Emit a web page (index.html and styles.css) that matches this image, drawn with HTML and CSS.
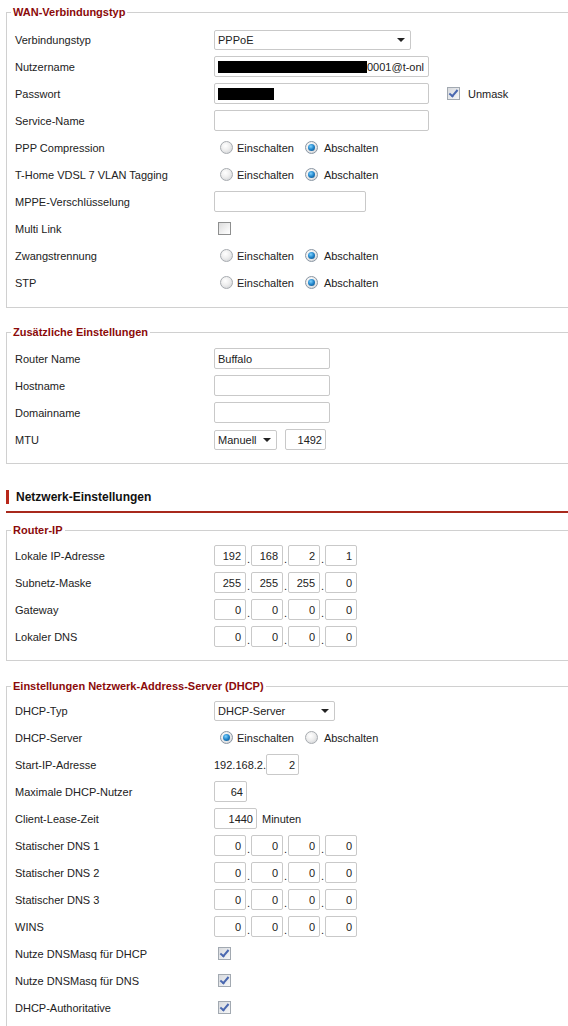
FILE: index.html
```html
<!DOCTYPE html>
<html lang="de">
<head>
<meta charset="utf-8">
<title>Setup</title>
<link rel="stylesheet" href="styles.css">
</head>
<body>
<div class="page">

  <fieldset class="box box-wan">
    <legend>WAN-Verbindungstyp</legend>
    <div class="row"><span class="lbl">Verbindungstyp</span>
      <div class="select w-197"><span>PPPoE</span><i class="arrow"></i></div></div>
    <div class="row"><span class="lbl">Nutzername</span>
      <div class="field w-215"><span class="redact r-user"></span><span class="clip">0001@t-onl</span></div></div>
    <div class="row"><span class="lbl">Passwort</span>
      <div class="field w-215"><span class="redact r-pass"></span></div>
      <span class="check on unmask"></span><span class="after">Unmask</span></div>
    <div class="row"><span class="lbl">Service-Name</span><div class="field w-215"></div></div>
    <div class="row"><span class="lbl">PPP Compression</span>
      <span class="radio"></span><span class="opt">Einschalten</span><span class="radio on second"></span><span class="opt">Abschalten</span></div>
    <div class="row"><span class="lbl">T-Home VDSL 7 VLAN Tagging</span>
      <span class="radio"></span><span class="opt">Einschalten</span><span class="radio on second"></span><span class="opt">Abschalten</span></div>
    <div class="row"><span class="lbl">MPPE-Verschlüsselung</span><div class="field w-152"></div></div>
    <div class="row"><span class="lbl">Multi Link</span><span class="check"></span></div>
    <div class="row"><span class="lbl">Zwangstrennung</span>
      <span class="radio"></span><span class="opt">Einschalten</span><span class="radio on second"></span><span class="opt">Abschalten</span></div>
    <div class="row"><span class="lbl">STP</span>
      <span class="radio"></span><span class="opt">Einschalten</span><span class="radio on second"></span><span class="opt">Abschalten</span></div>
  </fieldset>

  <fieldset class="box">
    <legend>Zusätzliche Einstellungen</legend>
    <div class="row"><span class="lbl">Router Name</span><div class="field w-116">Buffalo</div></div>
    <div class="row"><span class="lbl">Hostname</span><div class="field w-116"></div></div>
    <div class="row"><span class="lbl">Domainname</span><div class="field w-116"></div></div>
    <div class="row"><span class="lbl">MTU</span>
      <div class="select w-63"><span>Manuell</span><i class="arrow"></i></div>
      <div class="field num w-41 gap-8">1492</div></div>
  </fieldset>

  <h2 class="section">Netzwerk-Einstellungen</h2>

  <fieldset class="box box-ip">
    <legend>Router-IP</legend>
    <div class="row"><span class="lbl">Lokale IP-Adresse</span>
      <div class="ip"><span class="field num oct">192</span><span class="dot">.</span><span class="field num oct">168</span><span class="dot">.</span><span class="field num oct">2</span><span class="dot">.</span><span class="field num oct">1</span></div></div>
    <div class="row"><span class="lbl">Subnetz-Maske</span>
      <div class="ip"><span class="field num oct">255</span><span class="dot">.</span><span class="field num oct">255</span><span class="dot">.</span><span class="field num oct">255</span><span class="dot">.</span><span class="field num oct">0</span></div></div>
    <div class="row"><span class="lbl">Gateway</span>
      <div class="ip"><span class="field num oct">0</span><span class="dot">.</span><span class="field num oct">0</span><span class="dot">.</span><span class="field num oct">0</span><span class="dot">.</span><span class="field num oct">0</span></div></div>
    <div class="row"><span class="lbl">Lokaler DNS</span>
      <div class="ip"><span class="field num oct">0</span><span class="dot">.</span><span class="field num oct">0</span><span class="dot">.</span><span class="field num oct">0</span><span class="dot">.</span><span class="field num oct">0</span></div></div>
  </fieldset>

  <fieldset class="box box-dhcp">
    <legend>Einstellungen Netzwerk-Address-Server (DHCP)</legend>
    <div class="row"><span class="lbl">DHCP-Typ</span>
      <div class="select w-121"><span>DHCP-Server</span><i class="arrow"></i></div></div>
    <div class="row"><span class="lbl">DHCP-Server</span>
      <span class="radio on"></span><span class="opt">Einschalten</span><span class="radio second"></span><span class="opt">Abschalten</span></div>
    <div class="row"><span class="lbl">Start-IP-Adresse</span>
      <span class="prefix">192.168.2.</span><div class="field num w-33">2</div></div>
    <div class="row"><span class="lbl">Maximale DHCP-Nutzer</span><div class="field num w-33">64</div></div>
    <div class="row"><span class="lbl">Client-Lease-Zeit</span><div class="field num w-43">1440</div><span class="unit">Minuten</span></div>
    <div class="row"><span class="lbl">Statischer DNS 1</span>
      <div class="ip"><span class="field num oct">0</span><span class="dot">.</span><span class="field num oct">0</span><span class="dot">.</span><span class="field num oct">0</span><span class="dot">.</span><span class="field num oct">0</span></div></div>
    <div class="row"><span class="lbl">Statischer DNS 2</span>
      <div class="ip"><span class="field num oct">0</span><span class="dot">.</span><span class="field num oct">0</span><span class="dot">.</span><span class="field num oct">0</span><span class="dot">.</span><span class="field num oct">0</span></div></div>
    <div class="row"><span class="lbl">Statischer DNS 3</span>
      <div class="ip"><span class="field num oct">0</span><span class="dot">.</span><span class="field num oct">0</span><span class="dot">.</span><span class="field num oct">0</span><span class="dot">.</span><span class="field num oct">0</span></div></div>
    <div class="row"><span class="lbl">WINS</span>
      <div class="ip"><span class="field num oct">0</span><span class="dot">.</span><span class="field num oct">0</span><span class="dot">.</span><span class="field num oct">0</span><span class="dot">.</span><span class="field num oct">0</span></div></div>
    <div class="row"><span class="lbl">Nutze DNSMasq für DHCP</span><span class="check on"></span></div>
    <div class="row"><span class="lbl">Nutze DNSMasq für DNS</span><span class="check on"></span></div>
    <div class="row"><span class="lbl">DHCP-Authoritative</span><span class="check on"></span></div>
  </fieldset>

</div>
</body>
</html>
```
FILE: styles.css
```css
html, body {
  margin: 0;
  padding: 0;
  background: #fff;
  overflow: hidden;
}

body {
  font-family: "Liberation Sans", Arial, sans-serif;
  font-size: 11px;
  color: #222;
}

.page {
  padding: 5px 0 0 6px;
  width: 620px;
}

/* group boxes */
.box {
  margin: 0 0 17px 0;
  padding: 6px 8px 10px 8px;
  border: 1px solid #d0d0d0;
  border-right: none;
  min-width: 0;
}
.box-wan { padding-top: 7px; padding-bottom: 11px; }
.box-ip { padding-top: 5px; margin-bottom: 18px; }
.box-dhcp { padding-top: 4px; }

.box legend {
  margin-left: -4px;
  padding: 0 2px;
  font-weight: bold;
  font-size: 11px;
  line-height: 14px;
  color: #8b0a0a;
}

/* form rows */
.row {
  display: flex;
  align-items: center;
  height: 27px;
  white-space: nowrap;
}

.lbl {
  width: 199px;
  flex: none;
}

/* text fields */
.field {
  box-sizing: border-box;
  height: 21px;
  border: 1px solid #c9c9c9;
  border-radius: 2px;
  background: #fff;
  padding: 0 3px;
  display: flex;
  align-items: center;
  overflow: hidden;
  flex: none;
}

.num { justify-content: flex-end; }

.w-215 { width: 215px; }
.w-197 { width: 197px; }
.w-152 { width: 152px; }
.w-121 { width: 121px; }
.w-116 { width: 116px; }
.w-63  { width: 63px; }
.w-43  { width: 43px; }
.w-41  { width: 41px; }
.w-33  { width: 33px; }
.gap-8 { margin-left: 8px; }

.redact {
  display: block;
  height: 12px;
  background: #000;
  flex: none;
}
.r-user { width: 149px; }
.r-pass { width: 56px; }
.clip { flex: none; }

/* drop-downs */
.select {
  box-sizing: border-box;
  height: 20px;
  border: 1px solid #c9c9c9;
  border-radius: 2px;
  background: #fff;
  padding: 0 4px 0 3px;
  display: flex;
  align-items: center;
  justify-content: space-between;
  flex: none;
}

.arrow {
  width: 0;
  height: 0;
  border-left: 4px solid transparent;
  border-right: 4px solid transparent;
  border-top: 4px solid #222;
  margin-right: 1px;
}

/* IP address quads */
.ip {
  display: flex;
  align-items: flex-end;
}
.oct {
  width: 32px;
  padding-right: 4px;
}
.dot {
  width: 5px;
  padding-left: 1px;
  box-sizing: border-box;
  line-height: 14px;
}

.unit { margin-left: 5px; }

/* radio buttons */
.radio {
  box-sizing: border-box;
  width: 13px;
  height: 13px;
  border-radius: 50%;
  border: 1px solid #a7abb0;
  background: radial-gradient(circle at 40% 35%, #ffffff 0%, #eeeeee 45%, #c9ccd0 100%);
  margin-left: 6px;
  flex: none;
  display: flex;
  align-items: center;
  justify-content: center;
}
.radio.second { margin-left: 11px; }
.radio.on {
  border-color: #8a96a3;
}
.radio.on::after {
  content: "";
  width: 7px;
  height: 7px;
  border-radius: 50%;
  background: radial-gradient(circle at 40% 35%, #7fd3ff 0%, #1f82c8 50%, #114a7a 100%);
}
.opt { margin-left: 4px; }
.radio.second + .opt { margin-left: 6px; }

/* checkboxes */
.check {
  box-sizing: border-box;
  width: 13px;
  height: 13px;
  border: 1px solid #8e8f8f;
  background: linear-gradient(135deg, #dcdcdc 0%, #f6f6f6 70%, #ffffff 100%);
  margin-left: 4px;
  position: relative;
  flex: none;
}
.check.on {
  border-color: #a2a9b1;
  background: linear-gradient(135deg, #d8dade 0%, #eceef0 70%, #f6f6f7 100%);
}
.check.on::after {
  content: "";
  position: absolute;
  left: 3px;
  top: 0px;
  width: 3px;
  height: 7px;
  border-right: 2px solid #4a68b0;
  border-bottom: 2px solid #4a68b0;
  transform: rotate(40deg);
}
.check.unmask { margin-left: 18px; }
.after { margin-left: 8px; }

/* section heading */
.section {
  margin: 25px 0 10px 0;
  padding: 0 0 6px 10px;
  font-size: 12px;
  line-height: 16px;
  font-weight: bold;
  color: #111;
  border-bottom: 2px solid #a8291c;
  position: relative;
}
.section::before {
  content: "";
  position: absolute;
  left: 0;
  top: 1px;
  width: 3px;
  height: 14px;
  background: #b8281a;
}
```
